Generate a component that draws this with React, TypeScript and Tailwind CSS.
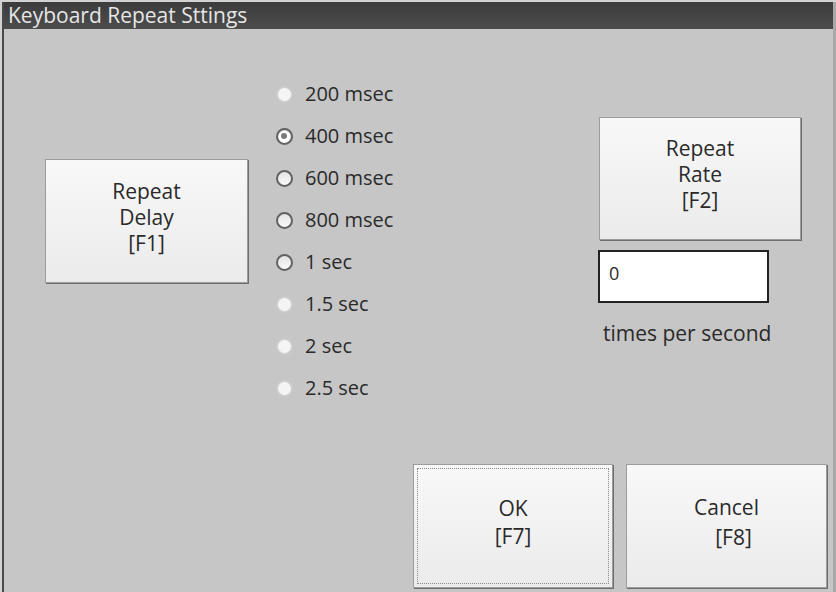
import React from "react"

const font = { fontFamily: '"Open Sans", "Noto Sans", sans-serif' }

function WinButton({
  lines,
  className = "",
  focused = false,
}: {
  lines: React.ReactNode[]
  className?: string
  focused?: boolean
}) {
  return (
    <button
      className={`flex shrink-0 border border-[#9c9c9c] bg-gradient-to-b from-[#f8f8f8] to-[#ebebeb] p-[3px] text-[21px] leading-[26px] text-[#2a2a2a] shadow-[1px_1px_0_#6e6e6e] ${className}`}
    >
      <div
        className={`flex flex-1 flex-col items-center justify-center border pb-[9px] ${
          focused ? "border-dotted border-[#8a8a8a]" : "border-transparent"
        }`}
      >
        {lines.map((l, i) => (
          <span key={i}>{l}</span>
        ))}
      </div>
    </button>
  )
}

type RadioState = "disabled" | "on" | "off"

function Radio({ state }: { state: RadioState }) {
  if (state === "disabled") {
    return <span className="h-[13px] w-[13px] rounded-full bg-[#f4f4f4] shadow-[0_0_3px_#e8e8e8]" />
  }
  return (
    <span className="flex h-[17px] w-[17px] items-center justify-center rounded-full border-2 border-[#626262] bg-gradient-to-b from-[#e4e4e4] to-[#fafafa]">
      {state === "on" && (
        <span className="flex h-[11px] w-[11px] items-center justify-center rounded-full bg-white">
          <span className="h-[6px] w-[6px] rounded-full bg-[#7a7a7a]" />
        </span>
      )}
    </span>
  )
}

const options: { label: string; state: RadioState }[] = [
  { label: "200 msec", state: "disabled" },
  { label: "400 msec", state: "on" },
  { label: "600 msec", state: "off" },
  { label: "800 msec", state: "off" },
  { label: "1 sec", state: "off" },
  { label: "1.5 sec", state: "disabled" },
  { label: "2 sec", state: "disabled" },
  { label: "2.5 sec", state: "disabled" },
]

export default function App() {
  return (
    <div className="h-[592px] w-[836px] bg-[#d2d2d2] pl-[2px] pt-[2px]" style={font}>
      <div className="flex h-full flex-col border-l-2 border-r-[3px] border-[#4a4a4a] border-r-[#a8a8a8] bg-[#c6c6c6]">
        <div className="flex h-[27px] items-center bg-gradient-to-b from-[#3c3c3c] to-[#4c4c4c] pl-[4px] text-[21px] leading-none text-[#e6e6e6]">
          Keyboard Repeat Sttings
        </div>

        <div className="flex">
          <WinButton
            className="ml-[41px] mt-[130px] h-[124px] w-[203px]"
            lines={["Repeat", "Delay", "[F1]"]}
          />

          <div className="ml-[24px] mt-[44px] flex flex-col">
            {options.map((o) => (
              <label key={o.label} className="flex h-[42px] items-center text-[20px] text-[#2a2a2a]">
                <span className="flex w-[24px] justify-center">
                  <Radio state={o.state} />
                </span>
                <span className="ml-[9px]">{o.label}</span>
              </label>
            ))}
          </div>

          <div className="ml-auto mr-[32px] mt-[88px] flex w-[202px] flex-col">
            <WinButton className="h-[123px] w-[202px] leading-[25px]" lines={["Repeat", "Rate", "[F2]"]} />
            <div className="ml-[-1px] mt-[10px] flex h-[53px] w-[171px] items-start border-2 border-[#222] bg-white pl-[9px] pt-[8px] text-[18px] text-[#2a2a2a]">
              0
            </div>
            <div className="ml-[4px] mt-[15px] text-[21px] text-[#2a2a2a]">times per second</div>
          </div>
        </div>

        <div className="mt-auto flex justify-end gap-[13px] pb-[4px] pr-[6px]">
          <WinButton className="h-[124px] w-[200px] leading-[28px]" focused lines={["OK", "[F7]"]} />
          <WinButton
            className="h-[124px] w-[201px] leading-[30px]"
            lines={["Cancel", <span className="pl-[14px]">[F8]</span>]}
          />
        </div>
      </div>
    </div>
  )
}
